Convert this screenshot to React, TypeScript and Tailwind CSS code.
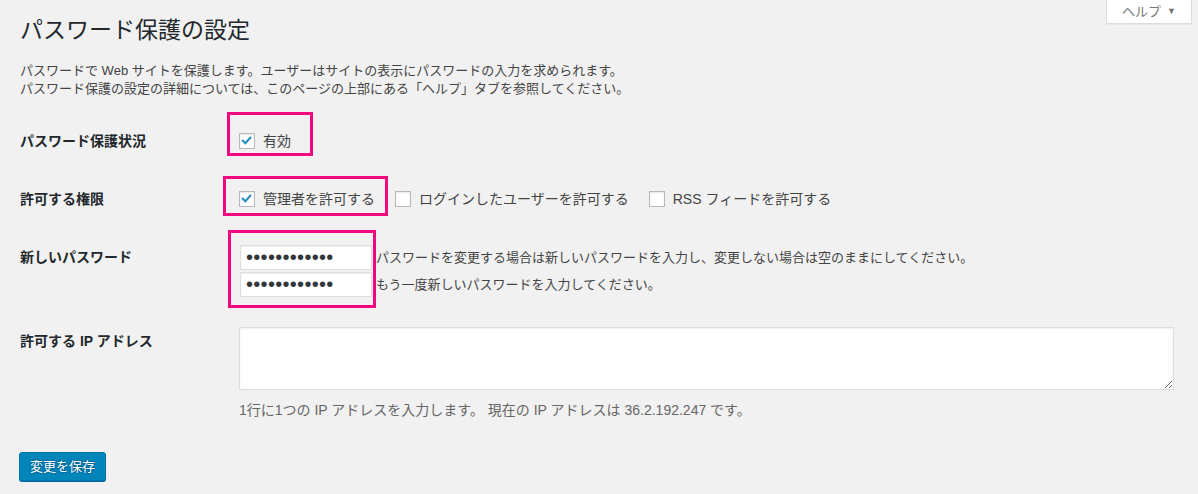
import { useState } from 'react';

const font = "font-['Liberation_Sans','Noto_Sans_CJK_JP',sans-serif]";

function Box({ checked }: { checked: boolean }) {
  return (
    <span className="relative inline-block w-4 h-4 bg-white border border-[#b4b9be] shadow-[inset_0_1px_2px_rgba(0,0,0,0.1)] shrink-0">
      {checked && (
        <svg viewBox="0 0 16 16" className="absolute inset-0 w-[14px] h-[14px]">
          <path d="M3.2 7.6 L6.2 10.6 L11.8 4.2" fill="none" stroke="#1e8cbe" strokeWidth="2.4" strokeLinecap="square" />
        </svg>
      )}
    </span>
  );
}

function Check({ label, checked }: { label: string; checked: boolean }) {
  return (
    <span className="inline-flex items-center gap-[8px] h-5 text-[14px] text-[#444]">
      <Box checked={checked} />
      <span>{label}</span>
    </span>
  );
}

// pink annotation frame drawn over the field
function Mark({ className }: { className: string }) {
  return <span className={`absolute border-[3px] border-[#f3077f] pointer-events-none ${className}`} />;
}

export default function App() {
  const [pw] = useState('abcdefghijkl');

  return (
    <div className={`${font} bg-[#f1f1f1] w-[1198px] h-[494px] relative text-[#444] overflow-hidden`}>
      {/* Help tab */}
      <div className="absolute top-0 right-[6px] w-[86px] h-[24px] bg-white border border-t-0 border-[#ddd] shadow-[0_1px_1px_rgba(0,0,0,0.04)] flex items-center justify-center gap-[6px] text-[13px] text-[#72777c]">
        <span>ヘルプ</span>
        <span className="text-[9px]">▼</span>
      </div>

      <div className="pl-5 pt-[15px]">
        <h1 className="text-[23px] leading-[30px] text-[#23282d]">パスワード保護の設定</h1>
        <div className="mt-[17px] text-[13px] leading-[18px]">
          <p>パスワードで Web サイトを保護します。ユーザーはサイトの表示にパスワードの入力を求められます。</p>
          <p>パスワード保護の設定の詳細については、このページの上部にある「ヘルプ」タブを参照してください。</p>
        </div>

        <div className="mt-[21px] flex flex-col">
          {/* Row 1 */}
          <div className="flex items-start h-[57px]">
            <div className="w-[219px] pt-[12px] text-[14px] leading-5 font-bold text-[#23282d]">パスワード保護状況</div>
            <div className="pt-[12px]">
              <div className="relative flex">
                <Check label="有効" checked />
                <Mark className="-left-[12px] -right-[22px] -top-[19px] -bottom-[5px]" />
              </div>
            </div>
          </div>

          {/* Row 2 */}
          <div className="flex items-start h-[57px]">
            <div className="w-[219px] pt-[13px] text-[14px] leading-5 font-bold text-[#23282d]">許可する権限</div>
            <div className="pt-[13px] flex items-start gap-[20px]">
              <div className="relative flex">
                <Check label="管理者を許可する" checked />
                <Mark className="-left-[16px] -right-[13px] -top-[13px] -bottom-[7px]" />
              </div>
              <Check label="ログインしたユーザーを許可する" checked={false} />
              <Check label="RSS フィードを許可する" checked={false} />
            </div>
          </div>

          {/* Row 3 */}
          <div className="flex items-start h-[79px]">
            <div className="w-[220px] pt-[14px] text-[14px] leading-5 font-bold text-[#23282d]">新しいパスワード</div>
            <div className="pt-[12px] flex flex-col gap-[2px]">
              {['パスワードを変更する場合は新しいパスワードを入力し、変更しない場合は空のままにしてください。', 'もう一度新しいパスワードを入力してください。'].map((t, i) => (
                <div key={i} className="flex items-center">
                  <div className="relative">
                    <input
                      type="password"
                      readOnly
                      value={pw}
                      className="block w-[132px] h-[25px] pl-[5px] pr-1 bg-white border border-[#ddd] shadow-[inset_0_1px_2px_rgba(0,0,0,0.07)] text-[20px] leading-[23px] tracking-[0.3px] text-[#32373c] outline-none"
                    />
                    {i === 0 && <Mark className="-left-[12px] -right-[4px] -top-[15px] -bottom-[38px]" />}
                  </div>
                  <span className="ml-[4px] text-[13px] text-[#444]">{t}</span>
                </div>
              ))}
            </div>
          </div>

          {/* Row 4 */}
          <div className="flex items-start">
            <div className="w-[219px] pt-[19px] text-[14px] leading-5 font-bold text-[#23282d]">許可する IP アドレス</div>
            <div className="pt-[15px]">
              <textarea
                readOnly
                className="block w-[935px] h-[63px] bg-white border border-[#ddd] shadow-[inset_0_1px_2px_rgba(0,0,0,0.07)] outline-none resize-y"
              />
              <p className="mt-[10px] text-[14px] leading-[20px] text-[#666]">
                1行に1つの IP アドレスを入力します。 現在の IP アドレスは 36.2.192.247 です。
              </p>
            </div>
          </div>
        </div>

        <button className="mt-[32px] -ml-px h-[29px] px-[10px] bg-[#0085ba] border border-[#0073aa] rounded-[3px] shadow-[0_1px_0_#006799] text-white text-[13px] [text-shadow:0_-1px_1px_#006799,1px_0_1px_#006799,0_1px_1px_#006799,-1px_0_1px_#006799]">
          変更を保存
        </button>
      </div>
    </div>
  );
}
